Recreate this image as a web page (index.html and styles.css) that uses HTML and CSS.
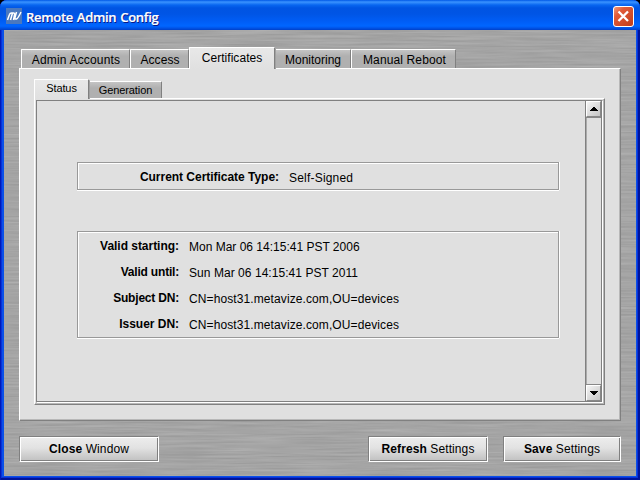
FILE: index.html
```html
<!DOCTYPE html>
<html lang="en">
<head>
<meta charset="utf-8">
<title>Remote Admin Config</title>
<link rel="stylesheet" href="styles.css">
</head>
<body>
<div class="window">
  <header class="titlebar">
    <svg class="logo" width="16" height="16" viewBox="0 0 16 16"><rect width="16" height="16" fill="#4a78be"/><path d="M1.5 12 L3.5 6.5 Q4 5 5.5 5 H6.5 M4.5 12 L6.5 5 H7.5 Q9 5 8.5 7 L7.5 12 M10.5 4 L9 9.5 Q8.5 11.5 10.5 11 Q12 10.5 15 4" fill="none" stroke="#fff" stroke-width="1.5"/></svg>
    <h1 class="title">Remote Admin Config</h1>
    <button class="close" aria-label="Close"><svg width="21" height="21" viewBox="0 0 21 21"><defs><linearGradient id="red" x2="1" y2="1"><stop stop-color="#f0a080"/><stop offset=".3" stop-color="#e05a38"/><stop offset="1" stop-color="#c03c18"/></linearGradient></defs><rect x=".5" y=".5" width="20" height="20" rx="2.5" fill="url(#red)" stroke="#fff"/><path d="M5.5 5.5 L15 15 M15 5.5 L5.5 15" stroke="#fff" stroke-width="2.3"/></svg></button>
  </header>
  <main class="content">
    <svg class="metal" width="632" height="446"><filter id="brush" x="0" y="0" width="100%" height="100%" color-interpolation-filters="sRGB"><feTurbulence type="fractalNoise" baseFrequency="0.014 0.5" numOctaves="3" seed="4"/><feColorMatrix values="0.12 0 0 0 0.585  0.12 0 0 0 0.585  0.12 0 0 0 0.585  0 0 0 0 1"/></filter><rect width="632" height="446" filter="url(#brush)"/></svg>
    <nav class="tabs">
      <span class="tab w-accounts"><b class="t1">Admin Accounts</b></span>
      <span class="tab w-access"><b class="t2">Access</b></span>
      <span class="tab active w-cert"><b class="t3">Certificates</b></span>
      <span class="tab w-monitor"><b class="t4">Monitoring</b></span>
      <span class="tab w-reboot"><b class="t5">Manual Reboot</b></span>
    </nav>
    <section class="panel">
      <nav class="tabs subtabs">
        <span class="tab active w-status"><b>Status</b></span>
        <span class="tab w-gen"><b>Generation</b></span>
      </nav>
      <div class="subpanel">
        <div class="scroll">
          <div class="body">
            <div class="group single">
              <div class="row"><span class="label">Current Certificate Type:</span><span class="value v0">Self-Signed</span></div>
            </div>
            <div class="group details">
              <div class="row"><span class="label">Valid starting:</span><span class="value v1">Mon Mar 06 14:15:41 PST 2006</span></div>
              <div class="row"><span class="label tight">Valid until:</span><span class="value v2">Sun Mar 06 14:15:41 PST 2011</span></div>
              <div class="row"><span class="label tight">Subject DN:</span><span class="value v3">CN=host31.metavize.com,OU=devices</span></div>
              <div class="row"><span class="label">Issuer DN:</span><span class="value v3">CN=host31.metavize.com,OU=devices</span></div>
            </div>
          </div>
          <div class="scrollbar">
            <span class="arrow"><svg width="8" height="4" shape-rendering="crispEdges"><path d="M3 0h2v1h1v1h1v1h1v1h-8v-1h1v-1h1v-1h1z"/></svg></span>
            <span class="arrow down"><svg width="8" height="4" shape-rendering="crispEdges"><path d="M0 0h8v1h-1v1h-1v1h-1v1h-2v-1h-1v-1h-1v-1h-1z"/></svg></span>
          </div>
        </div>
      </div>
    </section>
    <footer class="actions">
      <button class="btn b-close"><span><strong>Close</strong> Window</span></button>
      <button class="btn b-refresh"><span><strong>Refresh</strong> Settings</span></button>
      <button class="btn b-save"><span><strong>Save</strong> Settings</span></button>
    </footer>
  </main>
</div>
</body>
</html>
```
FILE: styles.css
```css
* { box-sizing: border-box; }
body { margin: 0; background: #000; font: 12px "Liberation Sans", Arial, sans-serif; color: #000; overflow: hidden; }
button { padding: 0; border: 0; background: none; font: inherit; color: inherit; display: block; }
svg { display: block; }
.window {
  width: 640px; height: 480px; padding: 0 4px 4px; overflow: hidden;
  border-radius: 7px 7px 0 0; background: #0a50e8;
  box-shadow: inset 1px 0 #0019b8, inset -2px 0 #001499, inset 0 -2px #001499, inset 2px 0 #0831d9, inset -3px 0 #0831d9, inset 0 -3px #0831d9;
}
.titlebar {
  height: 30px; margin: 0 -4px; padding: 2px 6px 0; display: flex; align-items: center;
  background: linear-gradient(#0058e6 0, #3a93ff 2px, #2a84fa 3px, #0866f0 5px, #0054e3 8px, #0055e5 14px, #005df5 21px, #0066ff 26px, #0054e8 28px, #0040c8 30px);
}
.title {
  margin: 2px 0 0 4px; font: 600 13px "Open Sans", "Noto Sans", sans-serif; letter-spacing: -0.3px;
  -webkit-text-stroke: 0.2px #fff; word-spacing: 0.8px;
  color: #fff; text-shadow: 1px 1px #0a1883; white-space: nowrap;
}
.close { margin-left: auto; }
.content { position: relative; height: 446px; padding: 17px 15px 0; }
.metal { position: absolute; left: 0; top: 0; }
.tabs { position: relative; z-index: 1; display: flex; align-items: flex-end; height: 22px; padding-left: 2px; }
.tab {
  height: 19px; display: flex; justify-content: center; align-items: center; margin-bottom: 1px;
  border: solid; border-width: 1px 1px 0; border-color: #fff #808080 #fff #fff; border-radius: 1px 1px 0 0;
  background: linear-gradient(#c4c4c4, #b0b0b0 6px); padding-top: 1px;
}
.tab b { font-weight: normal; white-space: nowrap; }
.t1 { letter-spacing: 0.17px; padding-left: 1px; }
.t2 { letter-spacing: 0.05px; padding-left: 1px; }
.t3 { letter-spacing: 0.05px; }
.t5 { letter-spacing: 0.13px; padding-left: 2px; }
.tab.active { height: 22px; margin-bottom: 0; padding-bottom: 1px; padding-top: 0; background: linear-gradient(#e8e8e8, #e0e0e0); box-shadow: 1px 1px #a0a0a0; clip-path: inset(0 -2px 0 0); }
.w-accounts { width: 109px; }
.w-access { width: 59px; }
.w-cert { width: 86px; }
.w-monitor { width: 76px; }
.w-reboot { width: 105px; }
.panel {
  position: relative; width: 602px; height: 353px; margin-top: -1px; padding: 10px 14px 0; background: #e0e0e0;
  border: 1px solid; border-color: #fff #808080 #808080 #fff; box-shadow: inset -1px -1px #b8b8b8;
}
.subtabs { height: 20px; padding: 0; font-size: 11px; }
.subtabs .tab { height: 17px; padding-top: 0; }
.subtabs .tab b { letter-spacing: -0.1px; }
.subtabs .tab.active { height: 20px; padding-bottom: 3px; }
.w-status { width: 55px; }
.w-gen { width: 73px; }
.subpanel { width: 571px; height: 307px; margin-top: -1px; border: 1px solid; border-color: #fff #808080 #808080 #fff; padding: 1px; box-shadow: inset -1px -1px #b8b8b8; }
.scroll { width: 567px; height: 303px; border: 1px solid; border-color: #808080 #fff #fff #808080; box-shadow: inset -1px -1px #808080; padding: 0 1px 1px 0; display: flex; }
.body { width: 548px; padding: 61px 0 0 40px; }
.group { width: 482px; border: 1px solid #999; box-shadow: inset 1px 1px #fff, 0 1px #fff, 1px 0 #fff; }
.single { height: 28px; padding-top: 1px; }
.details { height: 107px; margin-top: 41px; padding-top: 1px; }
.row { display: flex; height: 26px; line-height: 26px; white-space: nowrap; }
.label { width: 101px; text-align: right; font-weight: bold; letter-spacing: -0.03px; }
.tight { letter-spacing: -0.2px; }
.single .label { width: 201px; }
.value { padding-left: 10px; padding-top: 1px; }
.v0 { letter-spacing: 0.2px; }
.v2 { letter-spacing: 0.05px; }
.v3 { letter-spacing: 0.1px; }
.scrollbar { width: 16px; border-left: 1px solid #808080; display: flex; flex-direction: column; justify-content: space-between; box-shadow: inset 1px 0 #aaa; }
.arrow { height: 16px; display: flex; align-items: center; justify-content: center; border: 1px solid; border-color: #fff #888 #888 #fff; background: linear-gradient(135deg, #f4f4f4, #c4c4c4); box-shadow: 0 1px #888; }
.arrow.down { box-shadow: 0 -1px #888; }
.actions { position: relative; display: flex; margin-top: 15px; }
.btn { height: 26px; border: 1px solid; border-color: #808080 #fff #fff #808080; background: linear-gradient(#ededed, #e2e2e2 45%, #c0c0c0); box-shadow: inset 1px 1px #fff, inset -1px -1px #808080; }
.btn span { letter-spacing: 0.1px; white-space: nowrap; }
.b-close { width: 140px; }
.b-refresh { width: 120px; margin-left: 209px; }
.b-save { width: 118px; margin-left: 15px; }
```
